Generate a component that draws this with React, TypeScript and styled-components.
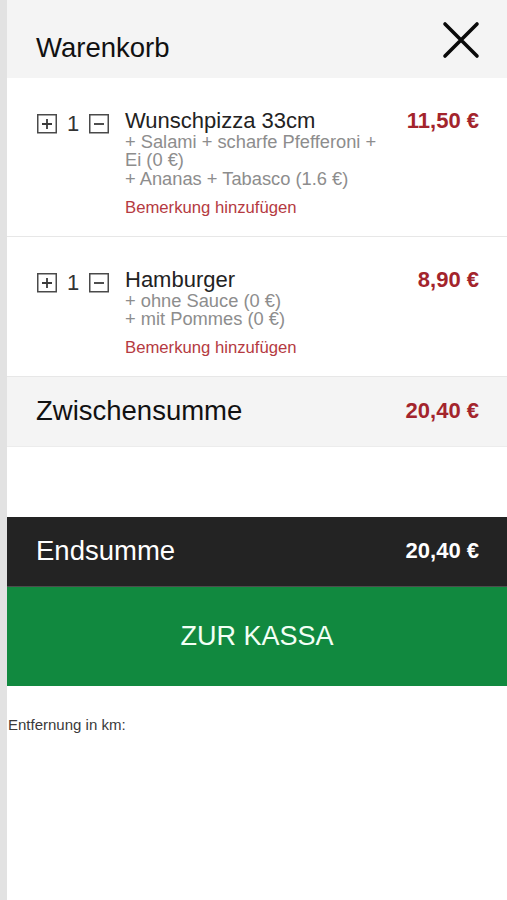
import React from "react";
import styled, { createGlobalStyle } from "styled-components";

const GlobalStyle = createGlobalStyle`
  html, body {
    margin: 0;
    padding: 0;
    background: #ffffff;
  }
  body {
    font-family: "Liberation Sans", Arial, Helvetica, sans-serif;
    -webkit-font-smoothing: antialiased;
  }
  * { box-sizing: border-box; }
`;

const Page = styled.div`
  display: flex;
  min-height: 900px;
  width: 507px;
`;

const SideStrip = styled.div`
  width: 7px;
  flex: 0 0 7px;
  background: #e2e2e2;
`;

const Panel = styled.div`
  flex: 1;
  display: flex;
  flex-direction: column;
  background: #ffffff;
`;

const Header = styled.div`
  height: 78px;
  background: #f4f4f4;
  display: flex;
  justify-content: space-between;
  align-items: flex-start;
  padding: 0 26px 0 29px;
`;

const Title = styled.h1`
  margin: 33px 0 0;
  font-size: 27.5px;
  line-height: 30px;
  font-weight: 400;
  color: #111;
`;

const CloseButton = styled.button`
  margin-top: 20px;
  width: 40px;
  height: 40px;
  padding: 0;
  border: none;
  background: transparent;
  display: flex;
  align-items: center;
  justify-content: center;
  cursor: pointer;
`;

const ItemRow = styled.div`
  display: flex;
  align-items: flex-start;
  padding: 31px 28px 18px 30px;
  border-bottom: 1px solid #e7e7e7;
`;

const Controls = styled.div`
  display: flex;
  align-items: center;
  gap: 9px;
  margin-top: 4px;
  margin-right: 16px;
`;

const QtyBox = styled.button`
  width: 20px;
  height: 20px;
  padding: 0;
  border: none;
  background: transparent;
  display: flex;
  align-items: center;
  justify-content: center;
`;

const Qty = styled.span`
  font-size: 22px;
  line-height: 22px;
  color: #333;
  width: 14px;
  text-align: center;
`;

const Details = styled.div`
  flex: 1;
  display: flex;
  flex-direction: column;
  max-width: 264px;
`;

const ItemName = styled.div`
  font-size: 22px;
  line-height: 24px;
  color: #222;
`;

const Options = styled.div`
  font-size: 18.3px;
  line-height: 18.3px;
  color: #8d8d8d;
  white-space: pre-line;
`;

const NoteLink = styled.a`
  margin-top: 10px;
  font-size: 16.7px;
  line-height: 20px;
  color: #b53a41;
  text-decoration: none;
  cursor: pointer;
`;

const Price = styled.div<{ $tone?: "red" | "white" }>`
  margin-left: auto;
  margin-top: 1px;
  font-size: 22px;
  line-height: 22px;
  font-weight: 700;
  color: ${(p) => (p.$tone === "white" ? "#ffffff" : "#a3242c")};
  white-space: nowrap;
`;

const SumRow = styled.div<{ $dark?: boolean }>`
  display: flex;
  align-items: center;
  justify-content: space-between;
  padding: 0 28px 0 29px;
  height: 70px;
  background: ${(p) => (p.$dark ? "#232323" : "#f4f4f4")};
  border-bottom: ${(p) => (p.$dark ? "1px solid #4d4d4d" : "1px solid #ececec")};
`;

const SumLabel = styled.span<{ $dark?: boolean }>`
  font-size: 27.5px;
  line-height: 30px;
  color: ${(p) => (p.$dark ? "#ffffff" : "#111")};
  margin-top: -2px;
`;

const SumPrice = styled(Price)`
  margin-left: 0;
  margin-top: -2px;
`;

const Spacer = styled.div`
  height: 70px;
`;

const CheckoutButton = styled.button`
  height: 99px;
  width: 100%;
  border: none;
  background: #11893f;
  color: #f2fff5;
  font-family: "Liberation Sans", Arial, Helvetica, sans-serif;
  font-size: 27px;
  cursor: pointer;
  display: flex;
  align-items: center;
  justify-content: center;
  padding: 0;
`;

const DistanceLabel = styled.div`
  margin-top: 30px;
  padding-left: 1px;
  font-size: 15px;
  line-height: 18px;
  color: #3a3a3a;
`;

const PlusIcon = () => (
  <svg width="20" height="20" viewBox="0 0 20 20">
    <rect x="0.75" y="0.75" width="18.5" height="18" fill="none" stroke="#4a4a4a" strokeWidth="1.5" />
    <path d="M5 10H15M10 5V15" stroke="#3a3a3a" strokeWidth="1.8" />
  </svg>
);

const MinusIcon = () => (
  <svg width="20" height="20" viewBox="0 0 20 20">
    <rect x="0.75" y="0.75" width="18.5" height="18" fill="none" stroke="#4a4a4a" strokeWidth="1.5" />
    <path d="M5 10H15" stroke="#3a3a3a" strokeWidth="1.8" />
  </svg>
);

const CloseIcon = () => (
  <svg width="40" height="40" viewBox="0 0 40 40">
    <path
      d="M4 4L36 36M36 4L4 36"
      stroke="#0a0a0a"
      strokeWidth="3.6"
      strokeLinecap="round"
    />
  </svg>
);

type Item = {
  name: string;
  options: string[];
  price: string;
};

const items: Item[] = [
  {
    name: "Wunschpizza 33cm",
    options: ["+ Salami + scharfe Pfefferoni + Ei (0 €)", "+ Ananas + Tabasco (1.6 €)"],
    price: "11,50 €",
  },
  {
    name: "Hamburger",
    options: ["+ ohne Sauce (0 €)", "+ mit Pommes (0 €)"],
    price: "8,90 €",
  },
];

export default function App() {
  return (
    <>
      <GlobalStyle />
      <Page>
        <SideStrip />
        <Panel>
          <Header>
            <Title>Warenkorb</Title>
            <CloseButton aria-label="Schließen">
              <CloseIcon />
            </CloseButton>
          </Header>

          {items.map((item) => (
            <ItemRow key={item.name}>
              <Controls>
                <QtyBox aria-label="Mehr">
                  <PlusIcon />
                </QtyBox>
                <Qty>1</Qty>
                <QtyBox aria-label="Weniger">
                  <MinusIcon />
                </QtyBox>
              </Controls>
              <Details>
                <ItemName>{item.name}</ItemName>
                <Options>{item.options.join("\n")}</Options>
                <NoteLink>Bemerkung hinzufügen</NoteLink>
              </Details>
              <Price>{item.price}</Price>
            </ItemRow>
          ))}

          <SumRow>
            <SumLabel>Zwischensumme</SumLabel>
            <SumPrice>20,40 €</SumPrice>
          </SumRow>

          <Spacer />

          <SumRow $dark>
            <SumLabel $dark>Endsumme</SumLabel>
            <SumPrice $tone="white">20,40 €</SumPrice>
          </SumRow>

          <CheckoutButton>ZUR KASSA</CheckoutButton>

          <DistanceLabel>Entfernung in km:</DistanceLabel>
        </Panel>
      </Page>
    </>
  );
}
